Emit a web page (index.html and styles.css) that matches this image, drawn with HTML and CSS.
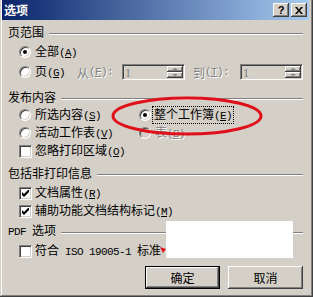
FILE: index.html
```html
<!DOCTYPE html>
<html>
<head>
<meta charset="utf-8">
<link rel="stylesheet" href="styles.css">
</head>
<body>
<div class="window">
  <div class="titlebar">
    <span class="title">选项</span>
    <div class="tbtns">
      <span class="tbtn q">?</span>
      <span class="tbtn"><svg width="8" height="7" viewBox="0 0 8 7"><path d="M0 0h2l2 2.5L6 0h2L5 3.5 8 7H6L4 4.5 2 7H0l3-3.5z" fill="#000"/></svg></span>
    </div>
  </div>
  <div class="body">
    <div class="glabel g1"><span>页范围</span><i class="etch"></i></div>
    <div class="row h24 indent">
      <span class="radio on"></span><span class="lbl">全部<span class="en">(<u>A</u>)</span></span>
    </div>
    <div class="row h16 indent">
      <span class="cell c1"><span class="radio"></span><span class="lbl">页<span class="en">(<u>G</u>)</span></span></span>
      <span class="cell c2 dis">从<span class="en">(<u>F</u>):</span></span>
      <span class="spin"><span class="val">1</span><span class="arrows"><span class="ab"><i class="tri up"></i></span><span class="ab"><i class="tri dn"></i></span></span></span>
      <span class="cell c3 dis">到<span class="en">(<u>T</u>):</span></span>
      <span class="spin"><span class="val">1</span><span class="arrows"><span class="ab"><i class="tri up"></i></span><span class="ab"><i class="tri dn"></i></span></span></span>
    </div>

    <div class="glabel g2"><span>发布内容</span><i class="etch"></i></div>
    <div class="grid indent">
      <div class="row h18"><span class="radio"></span><span class="lbl">所选内容<span class="en">(<u>S</u>)</span></span></div>
      <div class="row h18"><span class="radio on"></span><span class="lbl focus">整个工作簿<span class="en">(<u>E</u>)</span></span></div>
      <div class="row h18"><span class="radio"></span><span class="lbl">活动工作表<span class="en">(<u>V</u>)</span></span></div>
      <div class="row h18"><span class="radio off"></span><span class="lbl dis">表<span class="en">(<u>B</u>)</span></span></div>
      <div class="row h18 span2"><span class="check"></span><span class="lbl">忽略打印区域<span class="en">(<u>O</u>)</span></span></div>
    </div>

    <div class="glabel g3"><span>包括非打印信息</span><i class="etch"></i></div>
    <div class="row h18 indent m3"><span class="check"><svg width="7" height="7" viewBox="0 0 7 7"><path d="M0 2v3l2 2 5-5V-1L2 4z" fill="#000"/></svg></span><span class="lbl">文档属性<span class="en">(<u>R</u>)</span></span></div>
    <div class="row h18 indent"><span class="check"><svg width="7" height="7" viewBox="0 0 7 7"><path d="M0 2v3l2 2 5-5V-1L2 4z" fill="#000"/></svg></span><span class="lbl">辅助功能文档结构标记<span class="en">(<u>M</u>)</span></span></div>

    <div class="glabel g4"><span><span class="en">PDF </span>选项</span><i class="etch"></i></div>
    <div class="row h18 indent m3"><span class="check"></span><span class="lbl">符合<span class="en"> ISO 19005-1 </span>标准</span></div>

    <div class="buttons">
      <span class="btn def">确定</span>
      <span class="btn">取消</span>
    </div>
  </div>
  <svg class="ellipse" width="160" height="44" viewBox="0 0 160 44"><ellipse cx="80" cy="22" rx="74" ry="18" fill="none" stroke="#e0101a" stroke-width="3"/></svg>
  <svg class="arrowtip" width="6" height="6" viewBox="0 0 6 6"><path d="M0 0L6 2L3 6z" fill="#e0101a"/></svg>
  <div class="mask"></div>
</div>
</body>
</html>
```

FILE: styles.css
```css
html, body {
  margin: 0;
  padding: 0;
  background: #d4d0c8;
}
.window {
  position: relative;
  width: 313px;
  height: 297px;
  box-sizing: border-box;
  padding: 0 4px 4px 2px;
  background: #d4d0c8;
  box-shadow: inset -1px -1px #404040, inset 1px 0 #d4d0c8, inset -2px -2px #808080, inset 2px 0 #fff;
  font-family: "Noto Sans CJK SC", "Noto Sans", sans-serif;
  font-size: 12px;
  color: #000;
  overflow: hidden;
}
.en {
  font-family: "Liberation Mono", monospace;
  font-size: 11px;
  letter-spacing: -0.6px;
}
.titlebar {
  height: 20px;
  display: flex;
  align-items: center;
  justify-content: space-between;
  padding: 0 2px 0 2px;
  background: linear-gradient(to right, #0a246a, #a6caf0);
}
.title {
  color: #fff;
  font-weight: bold;
  font-size: 12px;
  line-height: 20px;
}
.tbtns {
  display: flex;
  gap: 2px;
}
.tbtn {
  width: 16px;
  height: 14px;
  box-sizing: border-box;
  background: #d4d0c8;
  box-shadow: inset -1px -1px #404040, inset 1px 1px #fff, inset -2px -2px #808080;
  display: flex;
  align-items: center;
  justify-content: center;
  font-family: "Liberation Sans", sans-serif;
  font-weight: bold;
  font-size: 11px;
  line-height: 14px;
}
.body {
  padding: 4px 6px 0 6px;
}
.glabel {
  height: 16px;
  display: flex;
  align-items: center;
  gap: 5px;
  line-height: 16px;
}
.g2 { margin-top: 9px; }
.g3 { margin-top: 5px; }
.g4 { margin-top: 3px; }
.etch {
  flex: 1;
  height: 1px;
  margin-top: 3px;
  background: #808080;
  border-bottom: 1px solid #fff;
}
.row {
  display: flex;
  align-items: center;
}
.h24 { height: 24px; }
.h16 { height: 16px; }
.h18 { height: 18px; }
.m3 { margin-top: 3px; }
.indent { padding-left: 11px; }
.lbl {
  margin-left: 4px;
  line-height: 14px;
  white-space: pre;
}
.cell { display: flex; align-items: center; white-space: nowrap; }
.c1 { width: 58px; }
.c2 { width: 45px; }
.c3 { width: 47px; margin-left: 8px; }
.dis {
  color: #808080;
  text-shadow: 1px 1px #fff;
}
.radio {
  position: relative;
  flex: none;
  width: 12px;
  height: 12px;
  box-sizing: border-box;
  border-radius: 50%;
  border: 1px solid;
  border-color: #808080 #fff #fff #808080;
  background: #fff;
  box-shadow: inset 1px 1px #404040, inset -1px -1px #d4d0c8;
}
.radio.on::after {
  content: "";
  position: absolute;
  left: 3px;
  top: 3px;
  width: 4px;
  height: 4px;
  border-radius: 50%;
  background: #000;
}
.radio.off { background: #d4d0c8; }
.check {
  flex: none;
  width: 13px;
  height: 13px;
  box-sizing: border-box;
  border: 1px solid;
  border-color: #808080 #fff #fff #808080;
  background: #fff;
  box-shadow: inset 1px 1px #404040, inset -1px -1px #d4d0c8;
  display: flex;
  align-items: center;
  justify-content: center;
}
.check + .lbl { margin-left: 3px; }
.grid {
  display: grid;
  grid-template-columns: 120px auto;
  margin-top: 1px;
}
.span2 { grid-column: 1 / 3; }
.focus {
  outline: 1px dotted #000;
  outline-offset: 0;
  padding: 0 1px;
  margin-left: 2px;
}
.spin {
  width: 63px;
  height: 16px;
  box-sizing: border-box;
  border: 1px solid;
  border-color: #808080 #fff #fff #808080;
  box-shadow: inset 1px 1px #404040, inset -1px -1px #d4d0c8;
  background: #d4d0c8;
  display: flex;
  align-items: stretch;
  padding: 1px 1px 1px 2px;
}
.val {
  flex: 1;
  color: #808080;
  font-size: 12px;
  line-height: 14px;
  font-family: "Liberation Serif", serif;
}
.arrows {
  width: 16px;
  display: flex;
  flex-direction: column;
}
.ab {
  flex: 1;
  background: #d4d0c8;
  box-shadow: inset -1px -1px #404040, inset 1px 1px #fff, inset -2px -2px #808080;
  display: flex;
  align-items: center;
  justify-content: center;
}
.tri {
  width: 0;
  height: 0;
  border-left: 3px solid transparent;
  border-right: 3px solid transparent;
}
.tri.up { border-bottom: 2px solid #808080; }
.tri.dn { border-top: 2px solid #808080; }
.buttons {
  display: flex;
  justify-content: flex-end;
  gap: 8px;
  margin-top: 6px;
}
.btn {
  width: 75px;
  height: 23px;
  box-sizing: border-box;
  background: #d4d0c8;
  box-shadow: inset -1px -1px #404040, inset 1px 1px #fff, inset -2px -2px #808080;
  display: flex;
  align-items: center;
  justify-content: center;
}
.btn.def {
  box-shadow: inset 0 0 0 1px #000, inset -2px -2px #404040, inset 2px 2px #fff, inset -3px -3px #808080;
}
.ellipse {
  position: absolute;
  left: 107px;
  top: 94px;
}
.arrowtip {
  position: absolute;
  left: 160px;
  top: 247px;
}
.mask {
  position: absolute;
  left: 166px;
  top: 221px;
  width: 127px;
  height: 37px;
  background: #fff;
}
```
